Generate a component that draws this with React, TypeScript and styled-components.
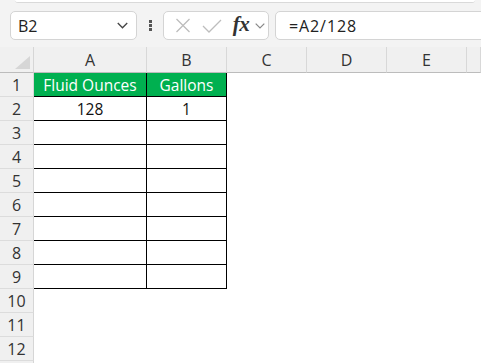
import React from "react";
import styled, { createGlobalStyle } from "styled-components";

const GlobalStyle = createGlobalStyle`
  html, body {
    margin: 0;
    padding: 0;
    background: #ffffff;
  }
  body {
    font-family: "Open Sans", "Liberation Sans", sans-serif;
    overflow: hidden;
  }
`;

const Page = styled.div`
  width: 481px;
  height: 363px;
  overflow: hidden;
  background: #ffffff;
`;

const Top = styled.div`
  height: 47px;
  background: #f3f3f3;
  display: flex;
  flex-direction: column;
`;

const RibbonEdge = styled.div`
  height: 2px;
  margin: 0 6px 0 15px;
  background: #ffffff;
  border-bottom: 1px solid #d9d9d9;
  border-radius: 0 0 4px 4px;
`;

const Bar = styled.div`
  display: flex;
  align-items: center;
  height: 29px;
  margin-top: 8px;
  padding-left: 10px;
`;

const Box = styled.div`
  box-sizing: border-box;
  height: 29px;
  display: flex;
  align-items: center;
  background: #ffffff;
  border: 1px solid #d4d4d4;
  border-radius: 5px;
`;

const NameBox = styled(Box)`
  width: 127px;
  justify-content: space-between;
  padding: 0 8px 0 7px;
  font-size: 16px;
  color: #222222;
`;

const Dots = styled.div`
  width: 26px;
  display: flex;
  flex-direction: column;
  align-items: center;
  gap: 1px;
`;

const Dot = styled.span`
  width: 3px;
  height: 3px;
  background: #555555;
`;

const ButtonBox = styled(Box)`
  width: 106px;
  padding-left: 6px;
`;

const IconSlot = styled.span<{ $w: number }>`
  width: ${(p) => p.$w}px;
  display: flex;
  align-items: center;
  justify-content: center;
`;

const Fx = styled.span`
  font-family: "Liberation Serif", "DejaVu Serif", serif;
  font-style: italic;
  font-size: 21px;
  font-weight: 600;
  color: #333333;
  letter-spacing: -0.5px;
  line-height: 1;
  margin-top: -2px;
`;

const FormulaInput = styled(Box)`
  flex: 1;
  margin: 0 -10px 0 6px;
  padding-left: 13px;
  font-size: 16px;
  color: #222222;
  letter-spacing: 0.9px;
`;

const Sheet = styled.div`
  display: flex;
  flex-direction: column;
`;

const Row = styled.div<{ $h?: number }>`
  display: flex;
  height: ${(p) => p.$h ?? 24}px;
`;

const Corner = styled.div`
  position: relative;
  box-sizing: border-box;
  width: 34px;
  background: #f0f0f0;
  border-right: 1px solid #d6d6d6;
  border-bottom: 1px solid #bcbcbc;

  &::after {
    content: "";
    position: absolute;
    right: 3px;
    bottom: 3px;
    width: 15px;
    height: 13px;
    background: #d6d6d6;
    clip-path: polygon(100% 0, 100% 100%, 0 100%);
  }
`;

const ColHead = styled.div<{ $w?: number }>`
  box-sizing: border-box;
  ${(p) => (p.$w ? `width: ${p.$w}px;` : "flex: 1;")}
  display: flex;
  align-items: center;
  justify-content: center;
  background: #f0f0f0;
  border-right: 1px solid #d8d8d8;
  border-bottom: 1px solid #bcbcbc;
  font-size: 16px;
  color: #333333;
  padding-top: 1px;
`;

const RowHead = styled.div`
  box-sizing: border-box;
  width: 34px;
  display: flex;
  align-items: center;
  justify-content: center;
  background: #f0f0f0;
  border-right: 1px solid #d6d6d6;
  border-bottom: 1px solid #dcdcdc;
  font-size: 16px;
  color: #333333;
  padding-top: 1px;
`;

const Cell = styled.div<{ $w: number; $head?: boolean; $boxed?: boolean }>`
  box-sizing: border-box;
  width: ${(p) => p.$w}px;
  display: flex;
  align-items: center;
  justify-content: center;
  background: ${(p) => (p.$head ? "#00b050" : "#ffffff")};
  color: ${(p) => (p.$head ? "#ffffff" : "#111111")};
  border-right: ${(p) => (p.$boxed ? "1px solid #000000" : "none")};
  border-bottom: ${(p) => (p.$boxed ? "1px solid #000000" : "none")};
  font-size: 15.5px;
  padding-top: 1px;
`;

const Filler = styled.div`
  flex: 1;
  background: #ffffff;
`;

const CloseIcon = () => (
  <svg width="16" height="15" viewBox="0 0 16 15">
    <path d="M1.5 1 L14.5 14 M14.5 1 L1.5 14" stroke="#bdbdbd" strokeWidth="1.3" fill="none" />
  </svg>
);

const CheckIcon = () => (
  <svg width="20" height="14" viewBox="0 0 20 14">
    <path d="M1 7 L7 13 L19 1" stroke="#bdbdbd" strokeWidth="1.3" fill="none" />
  </svg>
);

const Chevron = ({ w, h, color }: { w: number; h: number; color: string }) => (
  <svg width={w} height={h} viewBox="0 0 10 6">
    <path d="M0.7 0.7 L5 5 L9.3 0.7" stroke={color} strokeWidth="1.2" fill="none" />
  </svg>
);

const columns = [
  { label: "A", w: 113 },
  { label: "B", w: 80 },
  { label: "C", w: 80 },
  { label: "D", w: 80 },
  { label: "E", w: 80 },
];

const data: Record<number, [string, string]> = {
  1: ["Fluid Ounces", "Gallons"],
  2: ["128", "1"],
};

export default function App() {
  const rows = Array.from({ length: 13 }, (_, i) => i + 1);

  return (
    <Page>
      <GlobalStyle />
      <Top>
        <RibbonEdge />
        <Bar>
          <NameBox>
            <span>B2</span>
            <Chevron w={11} h={7} color="#444444" />
          </NameBox>
          <Dots>
            <Dot />
            <Dot />
            <Dot />
          </Dots>
          <ButtonBox>
            <IconSlot $w={26}>
              <CloseIcon />
            </IconSlot>
            <IconSlot $w={32}>
              <CheckIcon />
            </IconSlot>
            <IconSlot $w={26}>
              <Fx>fx</Fx>
            </IconSlot>
            <IconSlot $w={12}>
              <Chevron w={10} h={6} color="#888888" />
            </IconSlot>
          </ButtonBox>
          <FormulaInput>=A2/128</FormulaInput>
        </Bar>
      </Top>
      <Sheet>
        <Row $h={26}>
          <Corner />
          {columns.map((c) => (
            <ColHead key={c.label} $w={c.w}>
              {c.label}
            </ColHead>
          ))}
          <ColHead />
        </Row>
        {rows.map((r) => {
          const boxed = r <= 9;
          const values = data[r] ?? ["", ""];
          return (
            <Row key={r}>
              <RowHead>{r <= 12 ? r : ""}</RowHead>
              <Cell $w={113} $head={r === 1} $boxed={boxed}>
                {values[0]}
              </Cell>
              <Cell $w={80} $head={r === 1} $boxed={boxed}>
                {values[1]}
              </Cell>
              <Filler />
            </Row>
          );
        })}
      </Sheet>
    </Page>
  );
}
